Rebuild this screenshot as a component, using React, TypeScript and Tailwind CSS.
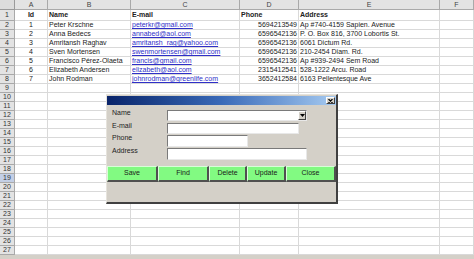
import React from "react";

const COLS = "grid grid-cols-[15px_33px_83px_109px_59px_141px_34px]";

type Row = { id: string; name: string; email: string; phone: string; address: string };

const data: Row[] = [
  { id: "1", name: "Peter Krschne", email: "peterkr@gmail.com", phone: "5694213549", address: "Ap #740-4159 Sapien. Avenue" },
  { id: "2", name: "Anna Bedecs", email: "annabed@aol.com", phone: "6596542136", address: "P. O. Box 816, 3700 Lobortis St." },
  { id: "3", name: "Amritansh Raghav", email: "amritansh_rag@yahoo.com", phone: "6596542136", address: "6061 Dictum Rd." },
  { id: "4", name: "Sven Mortensen", email: "swenmortensen@gmail.com", phone: "6596542136", address: "210-2454 Diam. Rd." },
  { id: "5", name: "Francisco Pérez-Olaeta", email: "francis@gmail.com", phone: "6596542136", address: "Ap #939-2494 Sem Road" },
  { id: "6", name: "Elizabeth Andersen", email: "elizabeth@aol.com", phone: "2315412541", address: "528-1222 Arcu. Road" },
  { id: "7", name: "John Rodman", email: "johnrodman@greenlife.com", phone: "3652412584", address: "6163 Pellentesque Ave" },
];

const cell = "border-r border-b border-[#d9d9d9] overflow-visible whitespace-nowrap leading-[8px] px-[1px]";
const rowHead = "border-r border-b border-[#a9a9a9] bg-[#e3e3e3] text-center text-[#333] leading-[8px]";

function RowHeader({ n }: { n: number }) {
  return <div className={n === 19 ? rowHead.replace("bg-[#e3e3e3]", "") + " bg-[#c3cfe6]" : rowHead}>{n}</div>;
}

function EmptyRow({ n }: { n: number }) {
  return (
    <div className={`${COLS} h-[9px]`}>
      <RowHeader n={n} />
      <div className={cell} />
      <div className={cell} />
      <div className={cell} />
      <div className={cell} />
      <div className={cell} />
      <div className={cell} />
    </div>
  );
}

function Btn({ label, w }: { label: string; w: string }) {
  return (
    <div
      className={`${w} h-[16px] bg-[#82fa82] border-t border-l border-t-[#d8ffd8] border-l-[#d8ffd8] border-r-2 border-b-2 border-r-[#505050] border-b-[#505050] flex items-center justify-center text-[7px] text-[#1a1a1a]`}
    >
      {label}
    </div>
  );
}

function Field({ label, w, h, mt, combo }: { label: string; w: string; h: string; mt: string; combo?: boolean }) {
  return (
    <div className={`flex items-start ${mt}`}>
      <div className="w-[60px] pl-[5px] text-[7px] leading-[8px] text-[#222] -mt-[1px]">{label}</div>
      <div className={`${w} ${h} bg-white border-t border-l border-t-[#7a7a7a] border-l-[#7a7a7a] border-r border-b border-r-[#e8e8e8] border-b-[#e8e8e8] flex justify-end`}>
        {combo && (
          <div className="w-[8px] h-full bg-[#d4d0c8] border-l border-t border-white border-r border-b border-r-[#404040] border-b-[#404040] flex items-center justify-center">
            <svg width="5" height="3" viewBox="0 0 5 3">
              <path d="M0 0 H5 L2.5 3 Z" fill="#000" />
            </svg>
          </div>
        )}
      </div>
    </div>
  );
}

export default function App() {
  const emptyRows = Array.from({ length: 19 }, (_, i) => i + 9);
  return (
    <div className="relative w-[474px] h-[259px] overflow-hidden bg-white font-['Liberation_Sans',Arial,sans-serif] text-[7px] text-[#222]">
      {/* Column header */}
      <div className={`${COLS} h-[10px]`}>
        <div className="border-r border-b border-[#9a9a9a] bg-[#dcdcdc]" />
        {["A", "B", "C", "D", "E", "F"].map((c) => (
          <div key={c} className="border-r border-b border-[#a9a9a9] bg-[#e3e3e3] text-center text-[#444] leading-[9px]">
            {c}
          </div>
        ))}
      </div>
      {/* Row 1 headings */}
      <div className={`${COLS} h-[11px]`}>
        <div className={`${rowHead} leading-[10px]`}>1</div>
        <div className={`${cell} text-center font-bold leading-[10px]`}>Id</div>
        <div className={`${cell} font-bold leading-[10px]`}>Name</div>
        <div className={`${cell} font-bold leading-[10px]`}>E-mail</div>
        <div className={`${cell} font-bold leading-[10px]`}>Phone</div>
        <div className={`${cell} font-bold leading-[10px]`}>Address</div>
        <div className={cell} />
      </div>
      {data.map((r, i) => (
        <div key={r.id} className={`${COLS} h-[9px]`}>
          <RowHeader n={i + 2} />
          <div className={`${cell} text-center`}>{r.id}</div>
          <div className={cell}>{r.name}</div>
          <div className={`${cell} text-[#2f2fc8] underline`}>{r.email}</div>
          <div className={`${cell} text-right`}>{r.phone}</div>
          <div className={cell}>{r.address}</div>
          <div className={cell} />
        </div>
      ))}
      {emptyRows.map((n) => (
        <EmptyRow key={n} n={n} />
      ))}
      <div className="h-[4px] bg-[#d4d0c8]" />

      {/* Dialog */}
      <div className="absolute left-[106px] top-[94px] w-[232px] h-[110px] bg-[#d4d0c8] border-l border-t border-[#e6e3dc] border-r-2 border-b-2 border-r-[#404040] border-b-[#404040] flex flex-col">
        <div className="h-[9px] mt-[1px] bg-gradient-to-r from-[#0a246a] via-[#3a6ab8] to-[#a6caf0] flex items-center justify-end pr-[1px]">
          <div className="w-[9px] h-[7px] bg-[#d4d0c8] border-t border-l border-white border-r border-b border-r-[#404040] border-b-[#404040] flex items-center justify-center">
            <svg width="5" height="4" viewBox="0 0 5 4">
              <path d="M0.5 0 L4.5 4 M4.5 0 L0.5 4" stroke="#000" strokeWidth="1.1" />
            </svg>
          </div>
        </div>
        <Field label="Name" w="w-[140px]" h="h-[11px]" mt="mt-[5px]" combo />
        <Field label="E-mail" w="w-[132px]" h="h-[11px]" mt="mt-[2px]" />
        <Field label="Phone" w="w-[81px]" h="h-[12px]" mt="mt-[1px]" />
        <Field label="Address" w="w-[140px]" h="h-[12px]" mt="mt-[1px]" />
        <div className="flex mt-[6px]">
          <Btn label="Save" w="w-[51px]" />
          <Btn label="Find" w="w-[51px]" />
          <Btn label="Delete" w="w-[38px]" />
          <Btn label="Update" w="w-[39px]" />
          <Btn label="Close" w="w-[50px]" />
        </div>
      </div>
    </div>
  );
}
